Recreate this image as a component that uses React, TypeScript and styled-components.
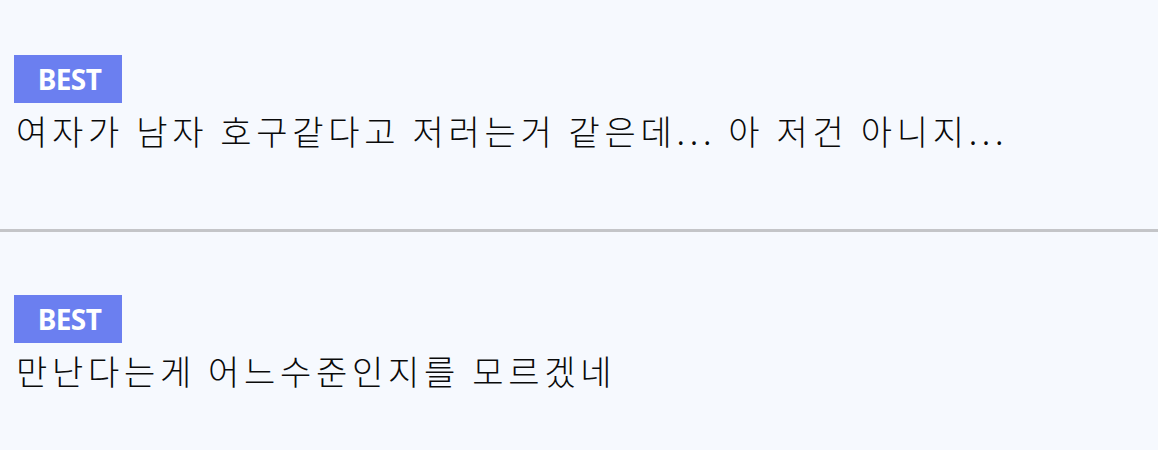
import React from "react";
import styled, { createGlobalStyle } from "styled-components";

const Global = createGlobalStyle`
  html, body { margin: 0; padding: 0; background: #f6f9fe; }
  body { font-family: "Noto Sans", "Noto Sans CJK KR", sans-serif; }
`;

const List = styled.div`
  display: flex;
  flex-direction: column;
  background: #f6f9fe;
`;

const Item = styled.div<{ $first?: boolean }>`
  display: flex;
  flex-direction: column;
  align-items: flex-start;
  gap: 6px;
  padding: ${(p) => (p.$first ? "55px" : "63px")} 14px 0;
  height: ${(p) => (p.$first ? "174px" : "160px")};
  border-bottom: ${(p) => (p.$first ? "3px solid #c4c5c8" : "none")};
  box-sizing: content-box;
`;

const Badge = styled.span`
  display: flex;
  align-items: center;
  justify-content: center;
  width: 108px;
  height: 48px;
  padding-left: 3px;
  box-sizing: border-box;
  background: #6b7ff0;
  color: #ffffff;
  font-family: "Noto Sans", sans-serif;
  font-weight: 700;
  font-size: 28px;
  letter-spacing: -0.6px;
`;

const Text = styled.p`
  margin: 0;
  padding-left: 2px;
  font-family: "Noto Sans CJK KR", "Noto Sans", sans-serif;
  font-size: 34px;
  font-weight: 300;
  letter-spacing: 4.7px;
  line-height: 44px;
  color: #0a0a0a;
`;

const comments = [
  "여자가 남자 호구같다고 저러는거 같은데... 아 저건 아니지...",
  "만난다는게 어느수준인지를 모르겠네",
];

export default function App() {
  return (
    <>
      <Global />
      <List>
        {comments.map((c, i) => (
          <Item key={i} $first={i === 0}>
            <Badge>BEST</Badge>
            <Text>{c}</Text>
          </Item>
        ))}
      </List>
    </>
  );
}
